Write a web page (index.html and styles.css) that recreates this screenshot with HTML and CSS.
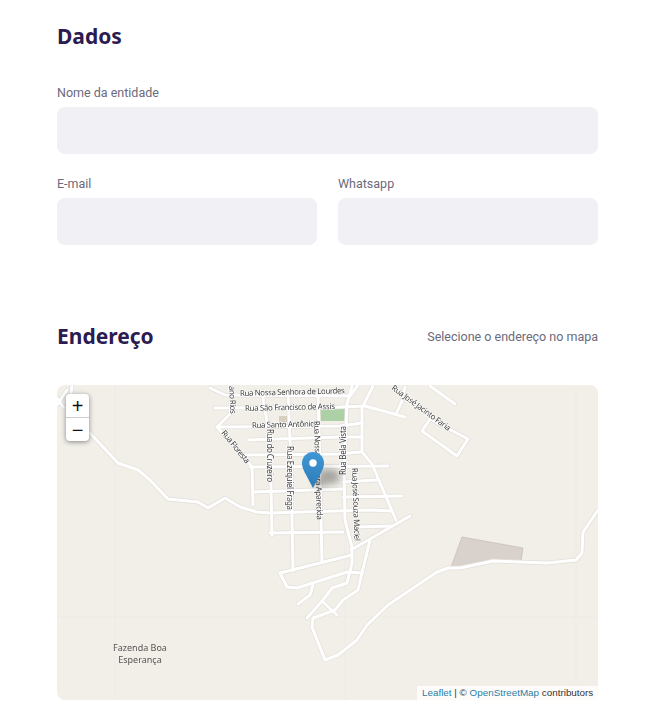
FILE: index.html
```html
<!DOCTYPE html>
<html lang="pt">
<head>
<meta charset="utf-8">
<title>Dados</title>
<link rel="stylesheet" href="styles.css">
</head>
<body>
<form class="page">
  <h2 class="title title-first">Dados</h2>
  <div class="field field-name">
    <label class="label">Nome da entidade</label>
    <div class="input"></div>
  </div>
  <div class="row">
    <div class="field">
      <label class="label">E-mail</label>
      <div class="input"></div>
    </div>
    <div class="field">
      <label class="label">Whatsapp</label>
      <div class="input"></div>
    </div>
  </div>
  <div class="address-head">
    <h2 class="title">Endereço</h2>
    <span class="hint">Selecione o endereço no mapa</span>
  </div>
  <div class="map">
    <svg class="map-svg" viewBox="57 385 541 315" width="541" height="315">
      <defs>
        <filter id="soft" x="-5%" y="-5%" width="110%" height="110%" color-interpolation-filters="sRGB"><feGaussianBlur stdDeviation="0.45"/></filter>
        <filter id="shadow" x="-50%" y="-50%" width="200%" height="200%" color-interpolation-filters="sRGB"><feGaussianBlur stdDeviation="3.5"/></filter>
        <linearGradient id="pin" x1="0" y1="0" x2="0" y2="1">
          <stop offset="0" stop-color="#3f97d6"/>
          <stop offset="1" stop-color="#2b7cb6"/>
        </linearGradient>
        <g id="roads">
          <path d="M89 432L118 463L138 470L150 480L168 499L198 502L208 508L225 498L240 507L257 512L270 513L370 510L392 511"/>
          <path d="M57 405L67 390M72 385L71 396M57 398L64 408"/>
          <path d="M210 388L225 395L350 396L358 385"/>
          <path d="M215 408L340 407L365 406L405 417"/>
          <path d="M405 387L402 401L397 412"/>
          <path d="M430 386L455 404"/>
          <path d="M373 386L363 406"/>
          <path d="M430 419L422 431L457 456L468 439Z"/>
          <path d="M232 388L230 414L217 427L248 462L252 467"/>
          <path d="M217 427L340 426L362 423"/>
          <path d="M248 440L340 437L362 437"/>
          <path d="M245 455L340 454L360 452"/>
          <path d="M250 467L388 466"/>
          <path d="M253 492L342 489"/>
          <path d="M343 482L377 480"/>
          <path d="M343 497L402 496"/>
          <path d="M252 467L253 505"/>
          <path d="M270 533L343 532"/>
          <path d="M357 527L392 526"/>
          <path d="M262 391L270 440L272 535"/>
          <path d="M288 391L291 464L293 571"/>
          <path d="M318 391L320 470L322 562"/>
          <path d="M352 386L347 404L344 470L345 520L352 547L352 563L347 583L332 588L323 600L307 618"/>
          <path d="M362 406L362 452L372 464L396 520"/>
          <path d="M410 516L351 550"/>
          <path d="M280 573L352 555"/>
          <path d="M280 573L287 587L297 588L347 572L362 573"/>
          <path d="M370 540L362 573L358 590L343 600L335 610L313 618L312 627L325 660L338 655L357 640L367 625L388 605L437 572L448 568L460 568L493 561L547 563L576 560L582 553L583 532L598 510"/>
          <path d="M323 602L337 615"/>
          <path d="M313 585L310 595L298 604"/>
        </g>
      </defs>
      <rect class="land" x="57" y="385" width="541" height="315"/>
      <g filter="url(#soft)">
        <path class="tile-line" d="M115 385V700M345 385V700M576 385V700M57 617H598"/>
        <rect class="park" x="320" y="408" width="25" height="13"/>
        <rect class="building" x="279" y="416" width="8" height="6"/>
        <path class="farm" d="M462 537L523 548L521 561L493 561L460 568L451 567Z"/>
        <use class="road-casing" href="#roads"/>
        <use class="road-fill" href="#roads"/>
        <g class="street">
          <text x="240" y="396" textLength="105" transform="rotate(-1.5 240 396)">Rua Nossa Senhora de Lourdes</text>
          <text x="245" y="411" textLength="90" transform="rotate(-1.3 245 411)">Rua São Francisco de Assis</text>
          <text x="252" y="428" textLength="63" transform="rotate(-1.5 252 428)">Rua Santo Antônio</text>
          <text x="221" y="433" textLength="40" transform="rotate(51 221 433)">Rua Floresta</text>
          <text x="267" y="429" textLength="53" transform="rotate(90 267 429)">Rua do Cruzeiro</text>
          <text x="287" y="446" textLength="64" transform="rotate(90 287 446)">Rua Ezequiel Fraga</text>
          <text x="314" y="421" textLength="99" transform="rotate(88.3 314 421)">Rua Nossa Senhora Aparecida</text>
          <text x="346" y="475" textLength="49" transform="rotate(-90 346 475)">Rua Bela Vista</text>
          <text x="352" y="468" textLength="73" transform="rotate(88 352 468)">Rua José Souza Maciel</text>
          <text x="391" y="389" textLength="71" transform="rotate(36.4 391 389)">Rua José Jacinto Faria</text>
          <text x="229" y="386" textLength="28" transform="rotate(87 229 386)">ano Rios</text>
        </g>
        <g class="place">
          <text x="140" y="651">Fazenda Boa</text>
          <text x="140" y="663">Esperança</text>
        </g>
      </g>
      <path class="pin-shadow" filter="url(#shadow)" d="M313 488L322 468L338 470L340 482Z"/>
      <g transform="translate(302 452) scale(.88)">
        <path fill="url(#pin)" d="M12.5 0C5.6 0 0 5.6 0 12.5C0 16 1 19 3 23L12.5 41L22 23C24 19 25 16 25 12.5C25 5.6 19.4 0 12.5 0Z"/>
        <circle class="pin-dot" cx="12.5" cy="12.5" r="4.2"/>
      </g>
    </svg>
    <div class="zoom">
      <span class="zoom-btn">+</span>
      <span class="zoom-btn">−</span>
    </div>
    <div class="attribution"><a class="attr-link">Leaflet</a> | © <a class="attr-link">OpenStreetMap</a> contributors</div>
  </div>
</form>
</body>
</html>
```
FILE: styles.css
```css
* { box-sizing: border-box; }
html, body { margin: 0; background: #fff; }
body { font-family: Roboto, "Liberation Sans", sans-serif; }
.page { width: 541px; margin-left: 57px; padding-top: 20px; }
.title {
  margin: 0;
  font-family: "Noto Sans", sans-serif;
  font-size: 21px;
  line-height: 32px;
  font-weight: 700;
  color: #2c1b50;
}
.title-first { margin-bottom: 32px; }
.field { display: flex; flex-direction: column; gap: 6px; min-width: 0; }
.field-name { margin-bottom: 21px; }
.label { font-size: 12.5px; line-height: 17px; color: #6c6a7c; }
.input { height: 47px; border-radius: 8px; background: #f0f0f5; }
.row { display: grid; grid-template-columns: 260px 260px; column-gap: 21px; }
.address-head {
  display: flex;
  justify-content: space-between;
  align-items: center;
  margin-top: 75px;
  margin-bottom: 33px;
}
.hint { font-size: 12.5px; color: #6c6a7c; }
.map {
  position: relative;
  width: 541px;
  height: 315px;
  border-radius: 8px;
  overflow: hidden;
}
.map-svg { display: block; }
.land { fill: #f2efe9; }
.tile-line { fill: none; stroke: #edebe5; stroke-width: 1; }
.park { fill: #add1a6; }
.building { fill: #d9cfc0; }
.farm { fill: #d9d2cc; stroke: #c6bcb2; stroke-width: .7; }
.road-casing { fill: none; stroke: #e2dfda; stroke-width: 4.4; stroke-linejoin: round; stroke-linecap: round; }
.road-fill { fill: none; stroke: #fff; stroke-width: 3; stroke-linejoin: round; stroke-linecap: round; }
.street { font-family: "Noto Sans", sans-serif; font-size: 8px; fill: #3c3c3c; paint-order: stroke; stroke: #fff; stroke-width: 1.2; }
.place { font-family: "Noto Sans", sans-serif; font-size: 9px; fill: #555; text-anchor: middle; }
.pin-shadow { fill: #000; opacity: .3; }
.pin-dot { fill: #fff; }
.zoom {
  position: absolute;
  left: 9px;
  top: 9px;
  width: 23px;
  display: flex;
  flex-direction: column;
  background: #fff;
  border-radius: 4px;
  box-shadow: 0 1px 5px rgba(0, 0, 0, .45);
}
.zoom-btn {
  height: 23px;
  display: flex;
  align-items: center;
  justify-content: center;
  font-family: "Liberation Sans", sans-serif;
  font-size: 20px;
  line-height: 1;
  color: #111;
}
.zoom-btn:first-child { height: 24px; border-bottom: 1px solid #ccc; }
.attribution {
  position: absolute;
  right: 0;
  bottom: 0;
  width: 181px;
  height: 14px;
  padding-left: 5px;
  background: rgba(255, 255, 255, .8);
  font-family: "Liberation Sans", sans-serif;
  font-size: 9.85px;
  line-height: 14px;
  color: #333;
  white-space: nowrap;
}
.attr-link { color: #2a7ea6; }
```
